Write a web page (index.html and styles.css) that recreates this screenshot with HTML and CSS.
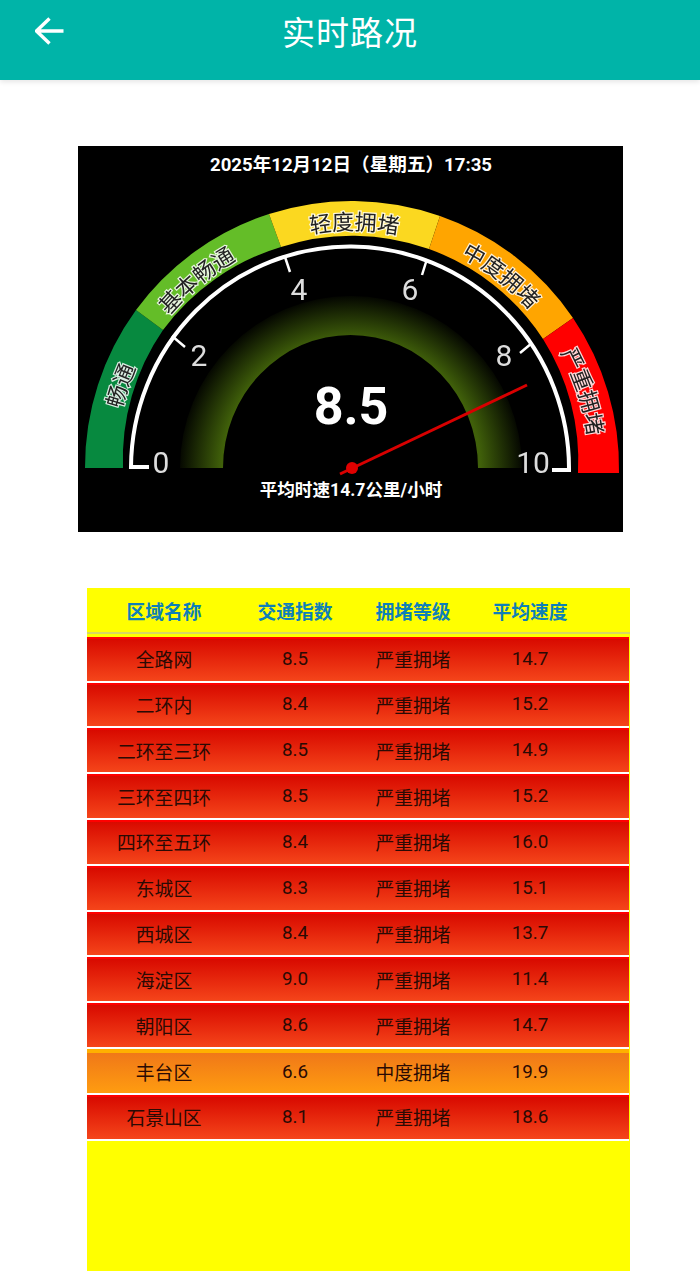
FILE: index.html
```html
<!DOCTYPE html>
<html lang="zh-CN">
<head>
    <meta charset="UTF-8">
    <meta name="viewport" content="width=device-width, initial-scale=1.0">
    <title>实时路况</title>
    <link rel="stylesheet" href="styles.css">
</head>
<body>
    <header class="top-bar">
        <svg class="back-icon" width="30" height="30" viewBox="0 0 30 30">
            <path d="M1.5 14H28.5M14.5 1.5L1.5 14L14.5 26.5"></path>
        </svg>
        <h1 class="top-title">实时路况</h1>
    </header>

    <div class="gauge-box">
        <svg class="gauge" width="545" height="386" viewBox="78 146 545 386">
            <defs>
                <radialGradient id="glow" gradientUnits="userSpaceOnUse" cx="351" cy="468" r="175">
                    <stop offset="0.74" stop-color="#40600a"></stop>
                    <stop offset="1" stop-color="#000"></stop>
                </radialGradient>
                <filter id="soft"><feGaussianBlur stdDeviation="0.5"></feGaussianBlur></filter>
                <path id="labelArc" d="M114 468A238 238 0 0 1 590 468"></path>
            </defs>
            <rect x="78" y="146" width="545" height="386" fill="#000"></rect>

            <path d="M85 468A267 267 0 0 1 136 310L163 330A228 228 0 0 0 123 468Z" fill="#07893f"></path>
            <path d="M136 310A267 267 0 0 1 269 214L281 247A228 228 0 0 0 163 330Z" fill="#64bd28"></path>
            <path d="M269 214A267 267 0 0 1 440 216L429 249A228 228 0 0 0 281 247Z" fill="#fbd820"></path>
            <path d="M440 216A267 267 0 0 1 573 318L543 339A228 228 0 0 0 429 249Z" fill="#ffa500"></path>
            <path d="M573 318A267 267 0 0 1 619 473H578A228 228 0 0 0 543 339Z" fill="#f00"></path>

            <g class="arc-labels" filter="url(#soft)">
                <text><textPath href="#labelArc" startOffset="10.9%">畅通</textPath></text>
                <text><textPath href="#labelArc" startOffset="28%">基本畅通</textPath></text>
                <text><textPath href="#labelArc" startOffset="50.3%">轻度拥堵</textPath></text>
                <text><textPath href="#labelArc" startOffset="71%">中度拥堵</textPath></text>
                <text><textPath href="#labelArc" startOffset="89.8%">严重拥堵</textPath></text>
            </g>

            <path d="M180 468A171 172 0 0 1 522 468H478A127.500 133 0 0 0 223 468Z" fill="url(#glow)"></path>

            <path class="scale" d="M149 467H131A219 222 0 0 1 569 470H552"></path>
            <path class="scale-tick" d="M172 336L185 347M285 257L290 272M427 259L422 275M532 343L520 353"></path>

            <g class="scale-labels" filter="url(#soft)">
                <text x="161" y="473">0</text>
                <text x="199" y="366">2</text>
                <text x="299" y="300">4</text>
                <text x="410" y="300">6</text>
                <text x="504" y="366">8</text>
                <text x="533" y="473">10</text>
            </g>

            <path class="needle" d="M340 474L527 385"></path>
            <circle cx="352" cy="468" r="6" fill="#e00000"></circle>

            <text class="gauge-date" x="351" y="171">2025年12月12日（星期五）17:35</text>
            <text class="gauge-value" x="351" y="424">8.5</text>
            <text class="gauge-speed" x="351" y="496">平均时速14.7公里/小时</text>
        </svg>
    </div>

    <div class="traffic-table">
        <div class="table-head">
            <span>区域名称</span><span>交通指数</span><span>拥堵等级</span><span>平均速度</span>
        </div>
        <div class="table-row"><span>全路网</span><span>8.5</span><span>严重拥堵</span><span>14.7</span></div>
        <div class="table-row"><span>二环内</span><span>8.4</span><span>严重拥堵</span><span>15.2</span></div>
        <div class="table-row"><span>二环至三环</span><span>8.5</span><span>严重拥堵</span><span>14.9</span></div>
        <div class="table-row"><span>三环至四环</span><span>8.5</span><span>严重拥堵</span><span>15.2</span></div>
        <div class="table-row"><span>四环至五环</span><span>8.4</span><span>严重拥堵</span><span>16.0</span></div>
        <div class="table-row"><span>东城区</span><span>8.3</span><span>严重拥堵</span><span>15.1</span></div>
        <div class="table-row"><span>西城区</span><span>8.4</span><span>严重拥堵</span><span>13.7</span></div>
        <div class="table-row"><span>海淀区</span><span>9.0</span><span>严重拥堵</span><span>11.4</span></div>
        <div class="table-row"><span>朝阳区</span><span>8.6</span><span>严重拥堵</span><span>14.7</span></div>
        <div class="table-row level-middle"><span>丰台区</span><span>6.6</span><span>中度拥堵</span><span>19.9</span></div>
        <div class="table-row"><span>石景山区</span><span>8.1</span><span>严重拥堵</span><span>18.6</span></div>
    </div>
</body>
</html>
```

FILE: styles.css
```css
/* General Styles */
html, body {
    height: 100%;
}
body {
    margin: 0;
    background-color: #fff;
    font-family: Roboto, "Noto Sans CJK SC", sans-serif;
    overflow: hidden;
}

/* Top bar */
.top-bar {
    display: grid;
    grid-template-columns: 1fr auto 1fr;
    align-items: center;
    height: 67px;
    padding-bottom: 13px;
    background-color: #00b4a8;
    box-shadow: 0 2px 5px rgba(0, 0, 0, 0.1);
}
.back-icon {
    margin: 0 0 3px 35px;
}
.back-icon path {
    fill: none;
    stroke: #fff;
    stroke-width: 3.4;
}
.top-title {
    margin: 0;
    color: #fff;
    font-size: 33px;
    font-weight: 400;
    line-height: 46px;
    letter-spacing: 1px;
}

/* Gauge */
.gauge-box {
    padding: 66px 0 0 78px;
}
.gauge {
    display: block;
}
.gauge text {
    text-anchor: middle;
}
.arc-labels text {
    fill: #222;
    font-size: 22px;
    stroke: #fff;
    stroke-width: 2.4px;
    stroke-opacity: 0.85;
    paint-order: stroke;
}
.scale-labels text {
    fill: #ddd;
    font-size: 30px;
    font-weight: 400;
}
.scale {
    fill: none;
    stroke: #fff;
    stroke-width: 4;
}
.scale-tick {
    fill: none;
    stroke: #fff;
    stroke-width: 2.5;
}
.needle {
    stroke: #d80000;
    stroke-width: 3;
}
.gauge-date {
    fill: #fff;
    font-size: 18.6px;
    font-weight: 700;
}
.gauge-value {
    fill: #fff;
    font-size: 52px;
    font-weight: 700;
}
.gauge-speed {
    fill: #fff;
    font-size: 17.6px;
    font-weight: 700;
}

/* Table */
.traffic-table {
    width: 543px;
    height: 683px;
    margin: 56px 0 0 87px;
    background-color: #ff0;
    font-size: 18.8px;
}
.table-head, .table-row {
    display: grid;
    grid-template-columns: 154px 108px 128px 106px;
    align-items: center;
    text-align: center;
}
.table-head {
    height: 44px;
    margin-bottom: 4.8px;
    box-shadow: 0 2px 0 #d8d860;
    color: #0e7fb8;
    font-weight: 700;
}
.table-row {
    box-sizing: border-box;
    width: 542px;
    height: 45.8px;
    padding-bottom: 2px;
    border-top: 2px solid #f00;
    border-bottom: 2px solid #fff;
    background: linear-gradient(#d80a00, #f5451a);
    color: #2a0a04;
}
.level-middle {
    border-top: 4px solid #ffb000;
    background: linear-gradient(#f07818, #ff9c10);
}
```
